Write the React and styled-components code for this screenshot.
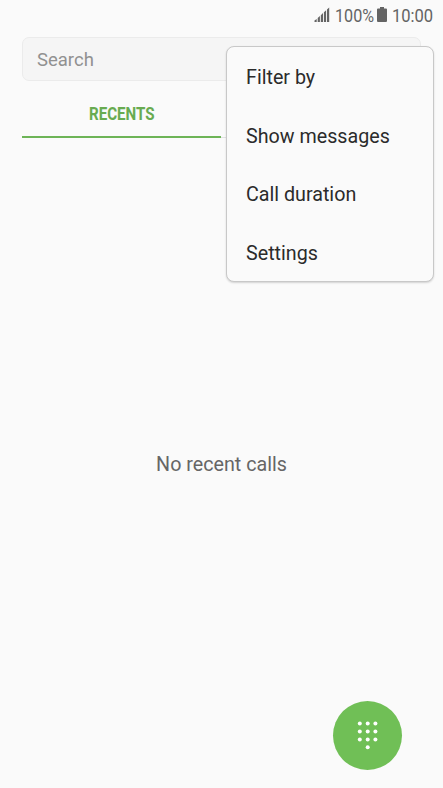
import React from 'react';
import styled, { createGlobalStyle } from 'styled-components';

const GlobalStyle = createGlobalStyle`
	* {
		box-sizing: border-box;
	}
	body {
		margin: 0;
		background: #fafafa;
		font-family: Roboto, "Liberation Sans", sans-serif;
	}
`;

const Screen = styled.div`
	position: relative;
	display: flex;
	flex-direction: column;
	height: 788px;
	width: 443px;
	overflow: hidden;
	background: #fafafa;
`;

const StatusBar = styled.header`
	display: flex;
	justify-content: flex-end;
	height: 37px;
	padding: 4px 10px 0 0;
	color: #646464;
	font-size: 19px;
	line-height: 23px;

	svg {
		display: block;
		margin: 3px 5px 0 0;
		flex: none;
	}
`;

/* narrow text, squeezed towards its left edge */
const Narrow = styled.span`
	display: block;
	flex: none;
	width: ${p => p.$width}px;
	white-space: nowrap;
	transform: scaleX(${p => p.$scale});
	transform-origin: 0 50%;
`;

const Search = styled.div`
	display: flex;
	align-items: center;
	flex: none;
	height: 44px;
	margin: 0 22px;
	padding: 1px 14px 0;
	border: 1px solid #ebebeb;
	border-radius: 7px;
	background: #f5f5f5;
	color: #919191;
	font-size: 18.5px;
`;

const Tabs = styled.nav`
	display: flex;
	flex: none;
	height: 57px;
	margin: 0 23px 0 22px;
`;

const Tab = styled.div`
	flex: 1;
	display: flex;
	justify-content: center;
	padding-top: 23px;
	line-height: 20px;
	font-size: 17.6px;
	font-weight: 700;
	color: ${p => p.$active ? '#68ab50' : '#777'};
	border-bottom: ${p => p.$active ? '2px solid #6db457' : '1px solid #e2e2e2'};
`;

const Empty = styled.main`
	flex: 1;
	padding-top: 314px;
	text-align: center;
	font-size: 19.7px;
	line-height: 25px;
	color: #666;
`;

const Menu = styled.ul`
	position: absolute;
	top: 46px;
	right: 9px;
	width: 208px;
	height: 236px;
	margin: 0;
	padding: 1px 0 0;
	list-style: none;
	border: 1px solid #c8c8c8;
	border-radius: 8px;
	background: #fafafa;
	box-shadow: 0 1px 2px rgba(0,0,0,.16);
`;

const MenuItem = styled.li`
	display: flex;
	align-items: center;
	height: 58.75px;
	padding-left: 19px;
	font-size: 19.7px;
	color: #2b2b2b;
`;

const DialButton = styled.button`
	position: absolute;
	right: 41px;
	bottom: 18px;
	width: 69px;
	height: 69px;
	padding: 0;
	border: 0;
	border-radius: 50%;
	background: #70bf56;

	svg {
		display: block;
	}
`;

const Signal = () => (
	<svg width="16" height="16" viewBox="0 0 16 16" fill="#646464">
		<path d="M.5 15v-1.5L2.7 12v3zM3.7 15v-4l2.2-2v6zM6.8 15V8.2L9 6v9zM9.9 15V5.2l2.2-2V15zM13 15V2.4L15.2.5V15z" />
	</svg>
);

const Battery = () => (
	<svg width="10" height="16" viewBox="0 0 10 16" fill="#646464">
		<path d="M3 0h4v1.5h2q1 0 1 1V14q0 1-1 1H1q-1 0-1-1V2.5q0-1 1-1h2z" />
	</svg>
);

const dots = [
	[26.8, 22.5], [34.7, 22.5], [42.4, 22.5],
	[26.8, 30.5], [34.7, 30.5], [42.4, 30.5],
	[26.8, 38.5], [34.7, 38.5], [42.4, 38.5],
	[34.7, 46.2],
];

const Keypad = () => (
	<svg width="69" height="69" viewBox="0 0 69 69" fill="#fff">
		{dots.map(([x, y]) => <circle key={x + '-' + y} cx={x} cy={y} r="2" />)}
	</svg>
);

const items = ['Filter by', 'Show messages', 'Call duration', 'Settings'];

const App = () => (
	<Screen>
		<GlobalStyle />
		<StatusBar>
			<Signal />
			<Narrow $width={42} $scale={0.85}>100%</Narrow>
			<Battery />
			<Narrow $width={41} $scale={0.87}>10:00</Narrow>
		</StatusBar>
		<Search>Search</Search>
		<Tabs>
			<Tab $active><Narrow $width={66} $scale={0.86}>RECENTS</Narrow></Tab>
			<Tab />
		</Tabs>
		<Empty>No recent calls</Empty>
		<Menu>
			{items.map(item => <MenuItem key={item}>{item}</MenuItem>)}
		</Menu>
		<DialButton aria-label="Keypad"><Keypad /></DialButton>
	</Screen>
);

export default App;
